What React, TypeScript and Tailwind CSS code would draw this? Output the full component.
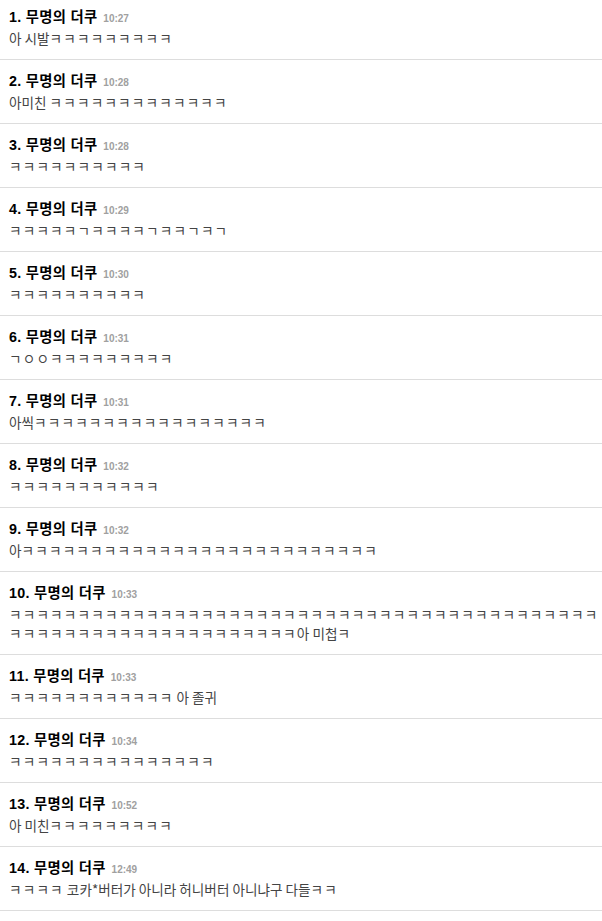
import React from 'react';

const comments = [
  { time: '10:27', text: '아 시발' + 'ㅋ'.repeat(9) },
  { time: '10:28', text: '아미친 ' + 'ㅋ'.repeat(13) },
  { time: '10:28', text: 'ㅋ'.repeat(10) },
  { time: '10:29', text: 'ㅋㅋㅋㅋㅋㄱㅋㅋㅋㅋㄱㅋㅋㄱㅋㄱ' },
  { time: '10:30', text: 'ㅋ'.repeat(10) },
  { time: '10:31', text: 'ㄱㅇㅇ' + 'ㅋ'.repeat(9) },
  { time: '10:31', text: '아씩' + 'ㅋ'.repeat(17) },
  { time: '10:32', text: 'ㅋ'.repeat(11) },
  { time: '10:32', text: '아' + 'ㅋ'.repeat(26) },
  { time: '10:33', text: 'ㅋ'.repeat(64) + '아 미첩ㅋ' },
  { time: '10:33', text: 'ㅋ'.repeat(12) + ' 아 졸귀' },
  { time: '10:34', text: 'ㅋ'.repeat(15) },
  { time: '10:52', text: '아 미친' + 'ㅋ'.repeat(9) },
  { time: '12:49', text: 'ㅋㅋㅋㅋ 코카*버터가 아니라 허니버터 아니냐구 다들ㅋㅋ' },
];

// jamo (ㄱ ㅇ ㅋ ...) render a bit narrower than in the original, so space them out
function Body({ text }: { text: string }) {
  const parts = text.match(/[\u3131-\u318e]+|[^\u3131-\u318e]+/g) ?? [];
  return (
    <>
      {parts.map((p, i) =>
        /[\u3131-\u318e]/.test(p) ? (
          <span key={i} className="tracking-[1.2px]">{p}</span>
        ) : (
          <span key={i}>{p}</span>
        )
      )}
    </>
  );
}

export default function App() {
  return (
    <div className="w-[602px] h-[921px] overflow-hidden bg-white">
      <ul className="-mt-[4px]">
        {comments.map((c, i) => (
          <li key={i} className="border-b border-[#dddddd] pl-[9px] pr-[2px] pt-[11px] pb-[11px]">
            <div className="flex items-baseline h-[20px] leading-[20px] font-['Liberation_Sans','Noto_Sans_CJK_KR',sans-serif]">
              <span className="text-[14.3px] tracking-[0.3px] font-bold text-black">{i + 1}. 무명의 더쿠</span>
              <span className="ml-[6px] text-[10px] font-bold text-[#a0a0a0]">{c.time}</span>
            </div>
            <p className="mt-[2px] text-[13.6px] leading-[19px] text-[#444444] break-all font-['Noto_Sans_CJK_KR',sans-serif]">
              <Body text={c.text} />
            </p>
          </li>
        ))}
      </ul>
    </div>
  );
}
